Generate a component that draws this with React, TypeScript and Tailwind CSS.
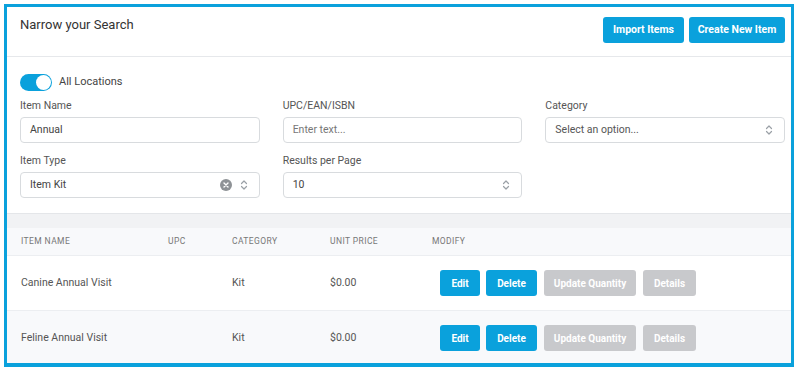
import React from "react";

const BLUE = "bg-[#0aa1dc]";

function Chevrons() {
  return (
    <svg width="8" height="12" viewBox="0 0 8 12" fill="none" stroke="#9aa0a6" strokeWidth="1.2" strokeLinecap="round" strokeLinejoin="round">
      <path d="M1.5 4.5 L4 2 L6.5 4.5" />
      <path d="M1.5 7.5 L4 10 L6.5 7.5" />
    </svg>
  );
}

function ClearIcon() {
  return (
    <svg width="12" height="12" viewBox="0 0 12 12">
      <circle cx="6" cy="6" r="6" fill="#8e9296" />
      <path d="M4 4 L8 8 M8 4 L4 8" stroke="#fff" strokeWidth="1.4" strokeLinecap="round" />
    </svg>
  );
}

function Field({ label, children }: { label: string; children: React.ReactNode }) {
  return (
    <div className="flex flex-col">
      <div className="text-[10.5px] leading-[14px] text-[#555] mb-[4px]">{label}</div>
      {children}
    </div>
  );
}

function Box({ children }: { children: React.ReactNode }) {
  return (
    <div className="h-[26px] border border-[#d8dbde] rounded-[4px] bg-white flex items-center pl-[9px] pr-[11px] text-[10.5px]">
      {children}
    </div>
  );
}

function Row({ name, bg }: { name: string; bg: string }) {
  return (
    <div className={`grid grid-cols-[147px_64px_98px_102px_1fr] items-center h-[55px] shrink-0 pl-[14px] text-[10.5px] text-[#555] border-b border-[#eceef1] ${bg}`}>
      <div>{name}</div>
      <div></div>
      <div>Kit</div>
      <div>$0.00</div>
      <div className="flex gap-[6px] pl-[8px] font-bold text-[10px] text-white">
        <div className={`w-[40px] h-[26px] rounded-[3px] ${BLUE} flex items-center justify-center`}>Edit</div>
        <div className={`w-[51px] h-[26px] rounded-[3px] ${BLUE} flex items-center justify-center`}>Delete</div>
        <div className="w-[92px] h-[26px] rounded-[3px] bg-[#c8c9cc] flex items-center justify-center ml-px">Update Quantity</div>
        <div className="w-[53px] h-[26px] rounded-[3px] bg-[#c8c9cc] flex items-center justify-center ml-px">Details</div>
      </div>
    </div>
  );
}

export default function App() {
  return (
    <div className="w-[800px] h-[372px] bg-white pl-[4px] pt-[4px] pr-[6px]" style={{ fontFamily: "Roboto, 'Liberation Sans', sans-serif" }}>
      <div className="border-[3px] border-b-[4px] border-[#0aa1dc] bg-white h-[363px] flex flex-col overflow-hidden">
        {/* Header */}
        <div className="h-[50px] flex justify-between items-start pt-[10px] pl-[13px] pr-[6px] border-b border-[#e6e8eb] shrink-0">
          <div className="text-[13px] leading-[16px] text-[#333]">Narrow your Search</div>
          <div className="flex gap-[5px] text-white font-bold text-[10.5px]">
            <div className={`w-[81px] h-[26px] rounded-[3px] ${BLUE} flex items-center justify-center`}>Import Items</div>
            <div className={`w-[96px] h-[26px] rounded-[3px] ${BLUE} flex items-center justify-center`}>Create New Item</div>
          </div>
        </div>
        {/* Form */}
        <div className="pt-[17px] pl-[13px] pr-[6px] pb-[15px] shrink-0">
          <div className="flex items-center gap-[7px] h-[17px] mb-[8px]">
            <div className={`w-[32px] h-[17px] rounded-full ${BLUE} relative`}>
              <div className="absolute right-[1px] top-[1px] w-[15px] h-[15px] rounded-full bg-white" />
            </div>
            <div className="text-[11px] text-[#444]">All Locations</div>
          </div>
          <div className="grid grid-cols-3 gap-x-[23px] gap-y-[11px]">
            <Field label="Item Name">
              <Box><span className="text-[#444]">Annual</span></Box>
            </Field>
            <Field label="UPC/EAN/ISBN">
              <Box><span className="text-[#777]">Enter text...</span></Box>
            </Field>
            <Field label="Category">
              <Box>
                <span className="text-[#555] flex-1">Select an option...</span>
                <Chevrons />
              </Box>
            </Field>
            <Field label="Item Type">
              <Box>
                <span className="text-[#444] flex-1">Item Kit</span>
                <span className="mr-[8px] flex"><ClearIcon /></span>
                <Chevrons />
              </Box>
            </Field>
            <Field label="Results per Page">
              <Box>
                <span className="text-[#444] flex-1">10</span>
                <Chevrons />
              </Box>
            </Field>
          </div>
        </div>
        {/* Table */}
        <div className="h-[15px] bg-[#f1f2f4] border-t border-[#e4e6e9] shrink-0" />
        <div className="grid grid-cols-[147px_64px_98px_102px_1fr] items-center h-[28px] pl-[14px] bg-[#f8f9fb] border-b border-[#eceef1] text-[8.5px] tracking-[0.4px] text-[#777] shrink-0">
          <div>ITEM NAME</div>
          <div>UPC</div>
          <div>CATEGORY</div>
          <div>UNIT PRICE</div>
          <div>MODIFY</div>
        </div>
        <Row name="Canine Annual Visit" bg="bg-white" />
        <Row name="Feline Annual Visit" bg="bg-[#f8f9fb]" />
      </div>
    </div>
  );
}
